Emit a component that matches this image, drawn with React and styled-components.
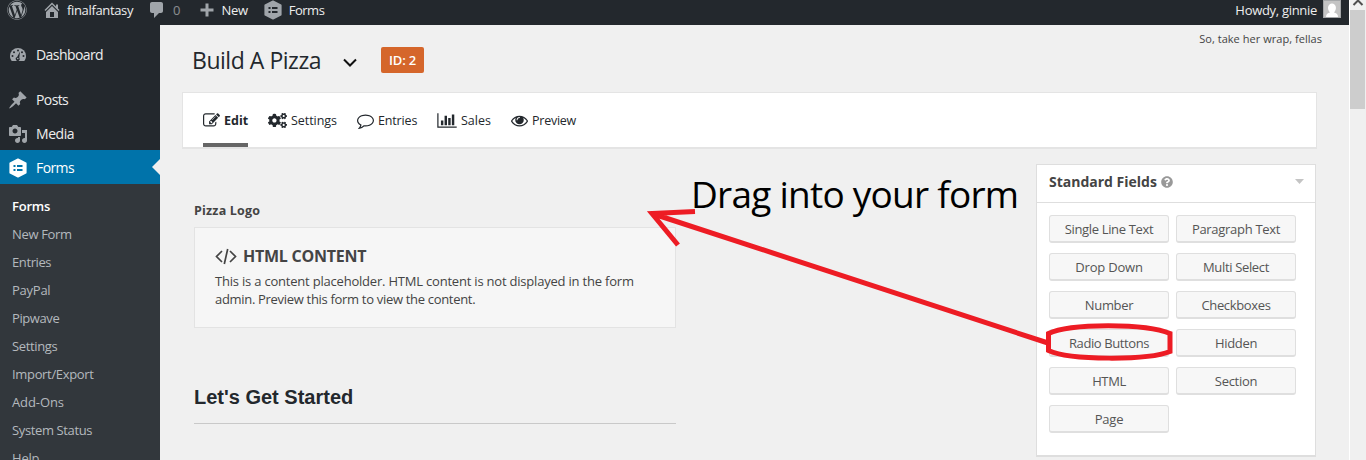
import React from 'react';
import styled, { createGlobalStyle } from 'styled-components';
import { FaWordpress, FaCogs, FaQuestionCircle } from 'react-icons/fa';

const GlobalStyle = createGlobalStyle`
  * { box-sizing: border-box; }
  body { margin: 0; background: #f0f0f0; font-family: "Open Sans", "Noto Sans", sans-serif; font-size: 13px; color: #444; overflow: hidden; }
`;

const Page = styled.div`position: relative; display: flex; width: 1366px; height: 460px; overflow: hidden; background: #f0f0f0;`;
const Main = styled.div`width: 1349px; display: flex; flex-direction: column;`;

const AdminBar = styled.header`height: 25px; flex: none; background: #23282d; display: flex; color: #eee; line-height: 20px; padding: 0 8px 0 7px;`;
const BarItem = styled.div`display: flex; align-items: flex-start; gap: ${p => p.$gap}px; margin-left: ${p => p.$ml || 0}px; white-space: nowrap; svg { flex: none; color: #a0a5aa; }`;
const Text = styled.span`white-space: nowrap; letter-spacing: ${p => p.$ls || 0}px; opacity: ${p => (p.$dim ? 0.5 : 1)};`;
const Account = styled(BarItem)`margin-left: auto;`;
const Avatar = styled.svg`width: 18px; height: 18px;`;

const Body = styled.div`display: flex; flex: 1; min-height: 0;`;
const Sidebar = styled.nav`width: 160px; flex: none; background: #23282d; padding-top: 13px; overflow: hidden;`;
const MenuItem = styled.div`
  position: relative; height: 34px; display: flex; align-items: center; padding: ${p => (p.$spaced ? '0 0 1px 8px' : '1px 0 0 8px')}; gap: 8px;
  margin-bottom: ${p => (p.$spaced ? 10 : 0)}px; font-size: 14px; color: ${p => (p.$active ? '#fff' : '#eee')};
  background: ${p => (p.$active ? '#0073aa' : 'transparent')};
  svg { flex: none; color: ${p => (p.$active ? '#fff' : '#a0a5aa')}; }
`;
const Pointer = styled.i`position: absolute; right: 0; top: 9px; border: 8px solid transparent; border-left: 0; border-right-color: #f0f0f0;`;
const SubMenu = styled.div`background: #32373c; padding: 8px 0 0 12px; height: 400px;`;
const SubItem = styled.div`height: 28px; line-height: 28px; font-size: 13px; color: ${p => (p.$current ? '#fff' : '#b4b9be')}; font-weight: ${p => (p.$current ? 600 : 400)};`;

const Content = styled.main`flex: 1; display: flex; flex-direction: column; padding: 0 32px 0 22px;`;
const TitleRow = styled.div`height: 67px; display: flex; align-items: flex-start; padding: 18px 0 0 10px;`;
const Title = styled.h1`margin: 0; width: 151px; font-size: 23px; font-weight: 400; line-height: 34px; color: #23282d; white-space: nowrap; letter-spacing: ${p => p.$ls}px;`;
const Chevron = styled.svg`width: 14px; height: 9px; margin-top: 15px;`;
const IdBadge = styled.span`margin: 4px 0 0 24px; width: 43px; height: 26px; border-radius: 2px; background: #d5662b; color: #fff; font-weight: 600; line-height: 27px; text-align: center; letter-spacing: -0.2px;`;
const Greeting = styled.span`margin: -11px -5px 0 auto; font-size: 11px; line-height: 14px;`;

const Toolbar = styled.div`height: 57px; flex: none; background: #fff; border: 1px solid #e4e4e4; border-bottom-width: 2px; display: flex; padding-left: 20px;`;
const Tab = styled.a`
  display: flex; width: ${p => p.$w}px; margin-right: ${p => p.$mr}px; height: 54px; padding: ${p => (p.$active ? '4px 0 0' : '0')}; align-items: center; gap: ${p => p.$gap || 4}px;
  font-size: 12.5px; font-weight: ${p => (p.$active ? 700 : 400)}; color: #23282d;
  border-bottom: ${p => (p.$active ? '4px solid #666' : '0')};
  svg { flex: none; }
`;

const Columns = styled.div`display: flex; justify-content: space-between; padding-right: 1px;`;
const FormColumn = styled.section`width: 482px; margin-left: 12px; padding-top: 52px;`;
const FieldLabel = styled.div`font-weight: 700; line-height: 20px; height: 26px; font-size: 12.5px;`;
const Placeholder = styled.div`height: 101px; border: 1px solid #e3e3e3; background: #f6f6f6; padding: 16px 20px;`;
const PlaceholderTitle = styled.div`display: flex; align-items: center; gap: 6px; height: 24px; font-size: 16px; font-weight: 700; margin-bottom: 4px;`;
const Line = styled.div`line-height: 18px; font-size: 13px; white-space: nowrap; letter-spacing: ${p => p.$ls}px;`;
const SectionTitle = styled.h2`margin: 56px 0 0; height: 40px; font: bold 20px/27px "Liberation Sans", Arial, sans-serif; color: #23282d; border-bottom: 1px solid #c9c9c9;`;

const FieldPanel = styled.aside`width: 280px; height: 293px; margin-top: 15px; background: #fff; border: 1px solid #dedede; border-bottom-width: 2px;`;
const PanelHead = styled.div`height: 38px; display: flex; align-items: center; padding: 0 11px 4px 12px; border-bottom: 1px solid #dedede; font-size: 14px; font-weight: 700; gap: 4px; svg:last-child { margin-left: auto; }`;
const FieldGrid = styled.div`display: grid; grid-template-columns: 120px 120px; gap: 10px 7px; padding: 12px;`;
const FieldButton = styled.button`height: 28px; padding: 0; border: 1px solid #dfdfdf; border-bottom-width: 2px; border-radius: 3px; background: #f7f7f7; color: #555; font: 13px/24px "Open Sans", "Noto Sans", sans-serif;`;

const Scrollbar = styled.div`width: 17px; border-left: 1px solid #fff; background: #f0f0f0; display: flex; flex-direction: column; align-items: flex-start;`;
const ScrollArrow = styled.svg`width: 16px; height: 10px; flex: none;`;
const Thumb = styled.div`width: 15px; height: 99px; background: #cdcdcd;`;

const Overlay = styled.svg`position: absolute; inset: 0; width: 1366px; height: 460px; pointer-events: none;`;
const Callout = styled.div`position: absolute; left: 691px; top: 168px; font-size: 37px; line-height: 52px; color: #000; white-space: nowrap; letter-spacing: ${p => p.$ls}px;`;

const Glyph = ({ d, size = 20, w, h, box = '0 0 20 20' }) => (
  <svg width={w || size} height={h || size} viewBox={box} fill="currentColor"><path fillRule="evenodd" d={d} /></svg>
);
const HOME = 'M16 8.5l1.53 1.53-1.06 1.06L10 4.6l-6.47 6.49-1.06-1.06L10 2.5l4 4v-2h2v4zm-6-2.46l6 5.99V18H4v-5.97zM12 17v-5H8v5h4z';
const COMMENT = 'M5 2h9c1.1 0 2 .9 2 2v7c0 1.1-.9 2-2 2h-2l-5 5v-5H5c-1.1 0-2-.9-2-2V4c0-1.1.9-2 2-2z';
const PIN = 'M10.44 3.02l1.82-1.82 6.36 6.35-1.83 1.82c-1.05-.68-2.48-.57-3.41.36l-.75.75c-.92.93-1.04 2.35-.35 3.41l-1.83 1.82-2.41-2.41-2.8 2.79c-.42.42-3.38 2.71-3.8 2.29s1.86-3.39 2.28-3.81l2.79-2.79L4.1 9.36l1.83-1.82c1.05.69 2.48.57 3.4-.36l.75-.75c.93-.92 1.05-2.35.36-3.41z';
const MEDIA = 'M13 11V4c0-.55-.45-1-1-1h-1.67L9 1H5L3.67 3H2c-.55 0-1 .45-1 1v7c0 .55.45 1 1 1h10c.55 0 1-.45 1-1zM7 4.5c1.38 0 2.5 1.12 2.5 2.5S8.38 9.5 7 9.5 4.5 8.38 4.5 7 5.62 4.5 7 4.5zM14 6h5v10.5c0 1.38-1.12 2.5-2.5 2.5S14 17.88 14 16.5s1.12-2.5 2.5-2.5c.17 0 .34.02.5.05V9h-3V6zm-4 8.05V13h2v3.5c0 1.38-1.12 2.5-2.5 2.5S7 17.88 7 16.5 8.12 14 9.5 14c.17 0 .34.02.5.05z';
const EDIT = 'M888 1184l116-116-152-152-116 116v56h96v96h56zm440-720q-16-16-33 1l-350 350q-17 17-1 33t33-1l350-350q17-17 1-33zm80 594v190q0 119-84.5 203.5t-203.5 84.5h-832q-119 0-203.5-84.5t-84.5-203.5v-832q0-119 84.5-203.5t203.5-84.5h832q63 0 117 25 15 7 18 23 3 17-9 29l-49 49q-14 14-32 8-23-6-45-6h-832q-66 0-113 47t-47 113v832q0 66 47 113t113 47h832q66 0 113-47t47-113v-126q0-13 9-22l64-64q15-15 35-7t20 29zm-96-738l288 288-672 672h-288v-288zm444 132l-92 92-288-288 92-92q28-28 68-28t68 28l152 152q28 28 28 68t-28 68z';
const BUBBLE = 'M896 384q-204 0-381.5 69.5t-282 187.5-104.5 255q0 112 71.5 213.5t201.5 175.5l87 50-27 96q-24 91-70 172 152-63 275-171l43-38 57 6q69 8 130 8 204 0 381.5-69.5t282-187.5 104.5-255-104.5-255-282-187.5-381.5-69.5zm896 512q0 174-120 321.5t-326 233-450 85.5q-70 0-145-8-198 175-460 242-49 14-114 22h-5q-15 0-27-10.5t-16-27.5v-1q-3-4-.5-12t2-10 4.5-9.5l6-9 7-8.5 8-9q7-8 31-34.5t34.5-38 31-39.5 32.5-51 27-59 26-76q-157-89-247.5-220t-90.5-281q0-130 71-248.5t191-204.5 286-136.5 348-50.5 348 50.5 286 136.5 191 204.5 71 248.5z';
const CHART = 'M640 896v512h-256v-512h256zm384-512v1024h-256v-1024h256zm1024 1152v128h-2048v-1536h128v1408h1920zm-640-896v768h-256v-768h256zm384-384v1152h-256v-1152h256z';
const EYE = 'M1664 960q-152-236-381-353 61 104 61 225 0 185-131.5 316.5t-316.5 131.5-316.5-131.5-131.5-316.5q0-121 61-225-229 117-381 353 133 205 333.5 326.5t434.5 121.5 434.5-121.5 333.5-326.5zm-720-384q0-20-14-34t-34-14q-125 0-214.5 89.5t-89.5 214.5q0 20 14 34t34 14 34-14 14-34q0-86 61-147t147-61q20 0 34-14t14-34zm848 384q0 34-20 69-140 230-376.5 368.5t-499.5 138.5-499.5-139-376.5-368q-20-35-20-69t20-69q140-229 376.5-368t499.5-139 499.5 139 376.5 368q20 35 20 69z';

const Hexagon = ({ inner }) => (
  <svg width="20" height="20" viewBox="0 0 20 20">
    <path d="M10 1.300l7.800 3.900v9.600l-7.800 3.900-7.800-3.900V5.200z" fill="currentColor" stroke="currentColor" strokeWidth="1.600" strokeLinejoin="round" />
    <path d="M5.500 8h2M9 8h5.500M5.500 12h2M9 12h5.500" stroke={inner} strokeWidth="1.800" />
  </svg>
);
const Gauge = () => (
  <svg width="20" height="20" viewBox="0 0 20 20">
    <path d="M3.760 16h12.480c1.340-1.630 1.760-3.200 1.760-5a8 8 0 0 0-16 0c0 1.800.42 3.370 1.760 5z" fill="currentColor" />
    <g fill="#23282d"><circle cx="10" cy="5.500" r="1" /><circle cx="6" cy="7.300" r="1" /><circle cx="14" cy="7.300" r="1" /><circle cx="4.500" cy="11" r="1" /><circle cx="15.500" cy="11" r="1" />
      <path d="M12 6.500l-.7 6.200a2 2 0 1 1-2.200-.6z" /></g>
    <circle cx="9.800" cy="13.500" r=".8" fill="currentColor" />
  </svg>
);

const SUB = [['Forms', -0.2], ['New Form', -0.35], ['Entries', -0.4], ['PayPal', -0.25], ['Pipwave', -0.4], ['Settings', -0.35], ['Import/Export', -0.33], ['Add-Ons', -0.1], ['System Status', -0.37], ['Help', -0.2]];
const FIELDS = [['Single Line Text', -0.33], ['Paragraph Text', -0.3], ['Drop Down', -0.2], ['Multi Select', -0.35], ['Number', -0.35], ['Checkboxes', -0.35], ['Radio Buttons', -0.4], ['Hidden', -0.3], ['HTML', -0.4], ['Section', -0.3], ['Page', -0.2]];

export default function App() {
  return (
    <Page>
      <GlobalStyle />
      <Main>
        <AdminBar>
          <BarItem><FaWordpress size={20} /></BarItem>
          <BarItem $ml={15} $gap={5}><Glyph d={HOME} /><Text $ls={-0.35}>finalfantasy</Text></BarItem>
          <BarItem $ml={14} $gap={6}><Glyph d={COMMENT} /><Text $dim>0</Text></BarItem>
          <BarItem $ml={16} $gap={5}>
            <svg width="20" height="20" viewBox="0 0 20 20"><path d="M3.500 10h13M10 3.500v13" stroke="currentColor" strokeWidth="3" /></svg>
            <Text $ls={-0.3}>New</Text>
          </BarItem>
          <BarItem $ml={15} $gap={6}><Hexagon inner="#23282d" /><Text $ls={-0.5}>Forms</Text></BarItem>
          <Account $gap={6}>
            <Text $ls={-0.3}>Howdy, ginnie</Text>
            <Avatar viewBox="0 0 18 18"><path d="M0 0h18v18H0z" fill="#a5a7a9" /><path d="M1 1h16v16H1z" fill="#c4c4c4" /><path d="M3 17c0-3 2-4 4-4.500C3.500 9 5 3.500 9 3.500S14.500 9 11 12.500c2 .5 4 1.500 4 4.500z" fill="#fff" /></Avatar>
          </Account>
        </AdminBar>
        <Body>
          <Sidebar>
            <MenuItem $spaced><Gauge /><Text $ls={-0.57}>Dashboard</Text></MenuItem>
            <MenuItem><Glyph d={PIN} /><Text $ls={-0.6}>Posts</Text></MenuItem>
            <MenuItem><Glyph d={MEDIA} /><Text $ls={-0.45}>Media</Text></MenuItem>
            <MenuItem $active><Hexagon inner="#0073aa" /><Text $ls={-0.6}>Forms</Text><Pointer /></MenuItem>
            <SubMenu>{SUB.map(([t, ls], i) => <SubItem key={t} $current={i === 0}><Text $ls={ls}>{t}</Text></SubItem>)}</SubMenu>
          </Sidebar>
          <Content>
            <TitleRow>
              <Title $ls={-0.47}>Build A Pizza</Title>
              <Chevron viewBox="0 0 14 9"><path d="M1 1.500l6 6 6-6" fill="none" stroke="#111" strokeWidth="2" /></Chevron>
              <IdBadge>ID: 2</IdBadge>
              <Greeting><Text $ls={0.04}>So, take her wrap, fellas</Text></Greeting>
            </TitleRow>
            <Toolbar>
              <Tab $active $w={45} $mr={20}><Glyph d={EDIT} size={17} box="0 0 1792 1792" /><Text>Edit</Text></Tab>
              <Tab $w={69} $mr={20}><FaCogs size={19} /><Text $ls={-0.05}>Settings</Text></Tab>
              <Tab $w={60} $mr={20}><Glyph d={BUBBLE} size={17} box="0 0 1792 1792" /><Text $ls={-0.15}>Entries</Text></Tab>
              <Tab $w={54} $mr={20}><Glyph d={CHART} w={20} h={17} box="0 0 2048 1792" /><Text>Sales</Text></Tab>
              <Tab $w={66} $mr={0}><Glyph d={EYE} size={17} box="0 0 1792 1792" /><Text $ls={-0.25}>Preview</Text></Tab>
            </Toolbar>
            <Columns>
              <FormColumn>
                <FieldLabel><Text $ls={0.2}>Pizza Logo</Text></FieldLabel>
                <Placeholder>
                  <PlaceholderTitle>
                    <svg width="22" height="17" viewBox="0 0 22 17"><path d="M7 3L1.500 8.500 7 14M15 3l5.500 5.500L15 14M12.700 1L9.300 16" fill="none" stroke="#444" strokeWidth="1.700" /></svg>
                    <Text $ls={-0.25}>HTML CONTENT</Text>
                  </PlaceholderTitle>
                  <Line><Text $ls={-0.205}>This is a content placeholder. HTML content is not displayed in the form</Text></Line>
                  <Line><Text $ls={-0.31}>admin. Preview this form to view the content.</Text></Line>
                </Placeholder>
                <SectionTitle>Let's Get Started</SectionTitle>
              </FormColumn>
              <FieldPanel>
                <PanelHead>
                  <Text>Standard Fields</Text><FaQuestionCircle size={12} color="#999" />
                  <svg width="9" height="5" viewBox="0 0 9 5"><path d="M0 0h9L4.500 5z" fill="#c4c4c4" /></svg>
                </PanelHead>
                <FieldGrid>{FIELDS.map(([t, ls]) => <FieldButton key={t}><Text $ls={ls}>{t}</Text></FieldButton>)}</FieldGrid>
              </FieldPanel>
            </Columns>
          </Content>
        </Body>
      </Main>
      <Scrollbar>
        <ScrollArrow viewBox="0 0 16 10"><path d="M3.500 5L8 .5 12.500 5" fill="none" stroke="#505050" strokeWidth="2" /></ScrollArrow>
        <Thumb />
      </Scrollbar>
      <Callout $ls={-0.75}>Drag into your form</Callout>
      <Overlay viewBox="0 0 1366 460">
        <g fill="none" stroke="#ed1c24" strokeWidth="5">
          <path d="M1048 343L652 213.500M695 211.500L652 213.500L678 245" />
          <path d="M1048.500 333.500C1070 323 1146 323 1170 333.500V351.500C1148 360.500 1070 360.500 1048.500 350.500Z" />
        </g>
      </Overlay>
    </Page>
  );
}
